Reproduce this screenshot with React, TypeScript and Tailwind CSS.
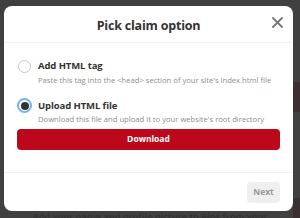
export default function App() {
  return (
    <div className="w-[300px] h-[218px] bg-[#404040] overflow-hidden relative" style={{ fontFamily: '"Open Sans", "Noto Sans", sans-serif' }}>
      <div className="absolute left-0 top-[210px] w-[300px] text-center text-[9px] font-bold text-[#333333]">Add your name and profile picture to Pins from your</div>
      <div className="absolute left-[293px] top-[82px] w-[7px] h-[30px] bg-[#3a2f31]" />
      <div className="absolute left-[293px] top-[198px] w-[7px] h-[20px] bg-[#3a2f31]" />
      <div className="relative ml-[4px] mt-[6px] w-[289px] h-[205px] bg-white rounded-[8px] flex flex-col">
        <div className="h-[37px] flex items-center justify-center relative border-b border-[#f3f3f3]">
          <div className="text-[12.5px] font-bold text-[#333] tracking-[-0.2px] mt-[5px]">Pick claim option</div>
          <svg className="absolute left-[268px] top-[11px]" width="11" height="11" viewBox="0 0 11 11">
            <path d="M1 1L10 10M10 1L1 10" stroke="#767676" strokeWidth="1.8" strokeLinecap="round" />
          </svg>
        </div>
        <div className="px-[13px] pt-[12px] flex flex-col">
          <div className="flex items-start gap-[6px]">
            <div className="w-[13px] h-[13px] rounded-full border border-[#c8c8c8] mt-[5px] ml-[1px] shrink-0" />
            <div className="flex flex-col ml-[1px]">
              <div className="text-[9.5px] font-bold text-[#333] leading-[14px] mt-[4px] tracking-[-0.1px]">Add HTML tag</div>
              <div className="text-[7.65px] text-[#8e8e8e] leading-[12px] mt-[1px] whitespace-nowrap">Paste this tag into the &lt;head&gt; section of your site's index.html file</div>
            </div>
          </div>
          <div className="flex items-start gap-[6px] mt-[9px]">
            <div className="w-[15px] h-[15px] rounded-full border-2 border-[#71b5f3] bg-white flex items-center justify-center mt-[3px] shrink-0">
              <div className="w-[8px] h-[8px] rounded-full bg-[#333]" />
            </div>
            <div className="flex flex-col">
              <div className="text-[9.5px] font-bold text-[#333] leading-[14px] mt-[4px] tracking-[-0.1px]">Upload HTML file</div>
              <div className="text-[7.65px] text-[#8e8e8e] leading-[12px] whitespace-nowrap">Download this file and upload it to your website's root directory</div>
            </div>
          </div>
          <div className="mt-[4px] h-[21px] mx-[0px] rounded-[4px] bg-[#bd081c] flex items-center justify-center text-white text-[8.5px] font-bold">Download</div>
        </div>
        <div className="mt-auto h-[39px] border-t border-[#f3f3f3] flex items-center justify-end pr-[13px]">
          <div className="w-[33px] h-[21px] rounded-[4px] bg-[#efefef] text-[#9a9a9a] text-[8.5px] font-bold flex items-center justify-center mt-[1px]">Next</div>
        </div>
      </div>
    </div>
  );
}
